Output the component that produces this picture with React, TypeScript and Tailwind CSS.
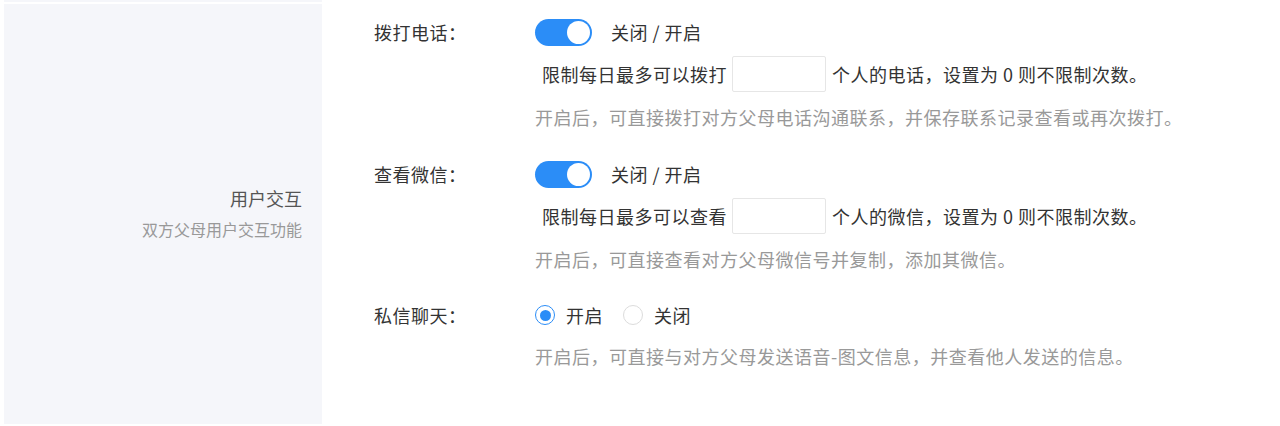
import { useState } from "react";

type LimitSection = {
  label: string;
  verb: string;
  target: string;
  hint: string;
};

const limitSections: LimitSection[] = [
  {
    label: "拨打电话：",
    verb: "拨打",
    target: "个人的电话，设置为 0 则不限制次数。",
    hint: "开启后，可直接拨打对方父母电话沟通联系，并保存联系记录查看或再次拨打。",
  },
  {
    label: "查看微信：",
    verb: "查看",
    target: "个人的微信，设置为 0 则不限制次数。",
    hint: "开启后，可直接查看对方父母微信号并复制，添加其微信。",
  },
];

function Toggle({ on, onChange }: { on: boolean; onChange: () => void }) {
  return (
    <button
      type="button"
      onClick={onChange}
      className={`flex h-[27px] w-[57px] shrink-0 items-center rounded-full p-[2px] ${
        on ? "justify-end bg-[#2b8df7]" : "justify-start bg-[#d9d9d9]"
      }`}
    >
      <span className="h-[23px] w-[23px] rounded-full bg-white" />
    </button>
  );
}

function Radio({
  checked,
  label,
  onSelect,
}: {
  checked: boolean;
  label: string;
  onSelect: () => void;
}) {
  return (
    <label className="flex cursor-pointer items-center gap-[11px]" onClick={onSelect}>
      <span
        className={`flex h-[20px] w-[20px] items-center justify-center rounded-full border bg-white ${
          checked ? "border-[#2b8df7]" : "border-[#dcdcdc]"
        }`}
      >
        {checked && <span className="h-[11px] w-[11px] rounded-full bg-[#2b8df7]" />}
      </span>
      <span>{label}</span>
    </label>
  );
}

export default function App() {
  const [toggles, setToggles] = useState([true, true]);
  const [chat, setChat] = useState(true);

  return (
    <div className="h-[426px] w-[1280px] overflow-hidden bg-white font-['Noto_Sans_CJK_SC',sans-serif] text-[18px] tracking-[0.5px] text-[#333]">
      {/* previous block edge */}
      <div className="ml-[4px] h-[2px] w-[318px] bg-[#f5f6fa]" />

      <div className="flex pt-[2px]">
        {/* Side panel */}
        <div className="ml-[4px] flex h-[420px] w-[318px] flex-col items-end justify-center bg-[#f5f6fa] pb-[4px] pr-[20px] tracking-normal">
          <div className="leading-[28px] text-[#555]">用户交互</div>
          <div className="mt-[5px] text-[16px] leading-[24px] text-[#999]">双方父母用户交互功能</div>
        </div>

        {/* Settings */}
        <div className="ml-[52px] flex flex-col pt-[15px]">
          {limitSections.map((s, i) => (
            <div key={s.label} className="mb-[30px] flex">
              <div className="w-[161px] leading-[27px]">{s.label}</div>
              <div className="flex flex-col">
                <div className="flex h-[27px] items-center gap-[19px]">
                  <Toggle
                    on={toggles[i]}
                    onChange={() => setToggles(toggles.map((t, j) => (j === i ? !t : t)))}
                  />
                  <span>关闭 / 开启</span>
                </div>
                <div className="mt-[10px] flex h-[36px] items-center pl-[7px]">
                  <span>限制每日最多可以{s.verb}</span>
                  <input
                    type="text"
                    className="ml-[5px] mr-[6px] h-[36px] w-[94px] rounded-[2px] border border-[#e6e6e6] px-2 outline-none"
                  />
                  <span>{s.target}</span>
                </div>
                <div className="mt-[11px] leading-[28px] text-[#999]">{s.hint}</div>
              </div>
            </div>
          ))}

          <div className="flex">
            <div className="w-[161px] leading-[24px]">私信聊天：</div>
            <div className="flex flex-col">
              <div className="flex h-[24px] items-center gap-[20px]">
                <Radio checked={chat} label="开启" onSelect={() => setChat(true)} />
                <Radio checked={!chat} label="关闭" onSelect={() => setChat(false)} />
              </div>
              <div className="mt-[15px] leading-[28px] text-[#999]">
                开启后，可直接与对方父母发送语音-图文信息，并查看他人发送的信息。
              </div>
            </div>
          </div>
        </div>
      </div>
    </div>
  );
}
